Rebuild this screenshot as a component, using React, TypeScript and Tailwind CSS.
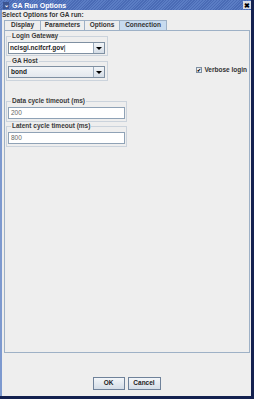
import React from 'react';

const font = "font-['Liberation_Sans',Arial,sans-serif]";

function Tab({ label, width, active }: { label: string; width: string; active?: boolean }) {
  return (
    <div
      className={`${width} h-[10px] flex items-center justify-center border border-b-0 border-r-0 last:border-r border-[#9eb1c6] text-[6.5px] font-bold leading-none text-[#333] ${
        active ? 'bg-[#c8dbef]' : 'bg-[#eeeeee]'
      }`}
    >
      {label}
    </div>
  );
}

function Group({ title, className, children }: { title: string; className?: string; children: React.ReactNode }) {
  return (
    <div className={`relative border border-[#cbd3dc] ${className ?? ''}`}>
      <span className="absolute left-[4px] top-[-4px] bg-[#eeeeee] px-[1px] text-[6.5px] font-bold leading-none text-[#3a3a3a]">
        {title}
      </span>
      {children}
    </div>
  );
}

function ArrowButton() {
  return (
    <div className="w-[11px] h-full flex items-center justify-center border-l border-[#9aaabb] bg-gradient-to-b from-[#f2f5f8] to-[#d5dde6]">
      <div className="w-0 h-0 border-l-[3px] border-r-[3px] border-t-[3px] border-l-transparent border-r-transparent border-t-black" />
    </div>
  );
}

export default function App() {
  return (
    <div className={`w-[254px] h-[399px] flex flex-col bg-[#14214f] overflow-hidden ${font}`}>
      {/* Title bar */}
      <div className="h-[10px] mr-[3px] flex items-center bg-[repeating-linear-gradient(135deg,#5b7dc4_0px,#5b7dc4_1px,#4a6bb5_1px,#4a6bb5_2px)]">
        <div className="ml-[3px] w-[6px] h-[7px] flex items-center justify-center bg-[#3c5592] text-white text-[6px] font-bold leading-none">
          ⌄
        </div>
        <span className="ml-[3px] text-[7px] font-bold text-white leading-none">GA Run Options</span>
        <div className="ml-auto w-[8px] h-[8px] flex items-center justify-center bg-[#d8dde6] text-[7px] font-bold leading-none text-black">
          ✖
        </div>
      </div>

      {/* Window body */}
      <div className="flex-1 mr-[3px] mb-[3px] border-l-2 border-[#7d99cf] bg-[#eeeeee] flex flex-col">
        <div className="h-[8px] mt-[2px] text-[6.5px] font-bold leading-none text-[#333]">Select Options for GA run:</div>

        {/* Tabs */}
        <div className="flex h-[10px] pl-[2px]">
          <Tab label="Display" width="w-[36px]" />
          <Tab label="Parameters" width="w-[44px]" />
          <Tab label="Options" width="w-[35px]" />
          <Tab label="Connection" width="w-[48px]" active />
        </div>

        {/* Tab panel */}
        <div className="h-[323px] ml-[2px] mr-[1px] border border-[#9eb1c6] flex flex-col">
          <div className="flex">
            <div className="w-[102px] ml-[1px] flex flex-col">
              <Group title="Login Gateway" className="mt-[5px] h-[20px] px-[1px] pt-[5px]">
                <div className="h-[12px] w-[97px] flex border border-[#7f90a2] bg-white">
                  <div className="flex-1 flex items-center pl-[1px] text-[6.5px] font-bold text-[#222] leading-none">
                    ncisgi.ncifcrf.gov<span className="font-normal text-black">|</span>
                  </div>
                  <ArrowButton />
                </div>
              </Group>
              <Group title="GA Host" className="mt-[5px] h-[20px] px-[1px] pt-[4px]">
                <div className="h-[12px] w-[97px] flex border border-[#7f90a2] bg-gradient-to-b from-[#f4f6f8] to-[#e3e8ee]">
                  <div className="flex-1 flex items-center pl-[2px] text-[6.5px] font-bold text-[#222] leading-none">bond</div>
                  <ArrowButton />
                </div>
              </Group>
            </div>
            <div className="flex-1 flex justify-end items-start pt-[36px] pr-[2px]">
              <div className="flex items-center gap-[2px]">
                <div className="w-[6px] h-[6px] border border-[#7f90a2] bg-[#e8edf3] flex items-center justify-center text-[5px] leading-none font-bold">
                  ✔
                </div>
                <span className="text-[6.5px] font-bold leading-none text-[#333]">Verbose login</span>
              </div>
            </div>
          </div>

          <div className="w-[121px] ml-[1px] mt-[20px] flex flex-col">
            <Group title="Data cycle timeout (ms)" className="h-[21px] px-[1px] pt-[5px]">
              <div className="h-[12px] border border-[#8fa2b6] bg-white flex items-center pl-[2px] text-[6.5px] text-[#666] leading-none">
                200
              </div>
            </Group>
            <Group title="Latent cycle timeout (ms)" className="mt-[4px] h-[21px] px-[1px] pt-[5px]">
              <div className="h-[12px] border border-[#8fa2b6] bg-white flex items-center pl-[2px] text-[6.5px] text-[#666] leading-none">
                800
              </div>
            </Group>
          </div>
        </div>

        {/* Buttons */}
        <div className="flex-1 flex items-end justify-center gap-[3px] pb-[6px]">
          <button className="w-[32px] h-[13px] border border-[#6f829a] bg-gradient-to-b from-[#f3f6f9] to-[#d4dde7] text-[6.5px] font-bold leading-none text-[#222]">
            OK
          </button>
          <button className="w-[33px] h-[13px] border border-[#6f829a] bg-gradient-to-b from-[#f3f6f9] to-[#d4dde7] text-[6.5px] font-bold leading-none text-[#222]">
            Cancel
          </button>
        </div>
      </div>
    </div>
  );
}
